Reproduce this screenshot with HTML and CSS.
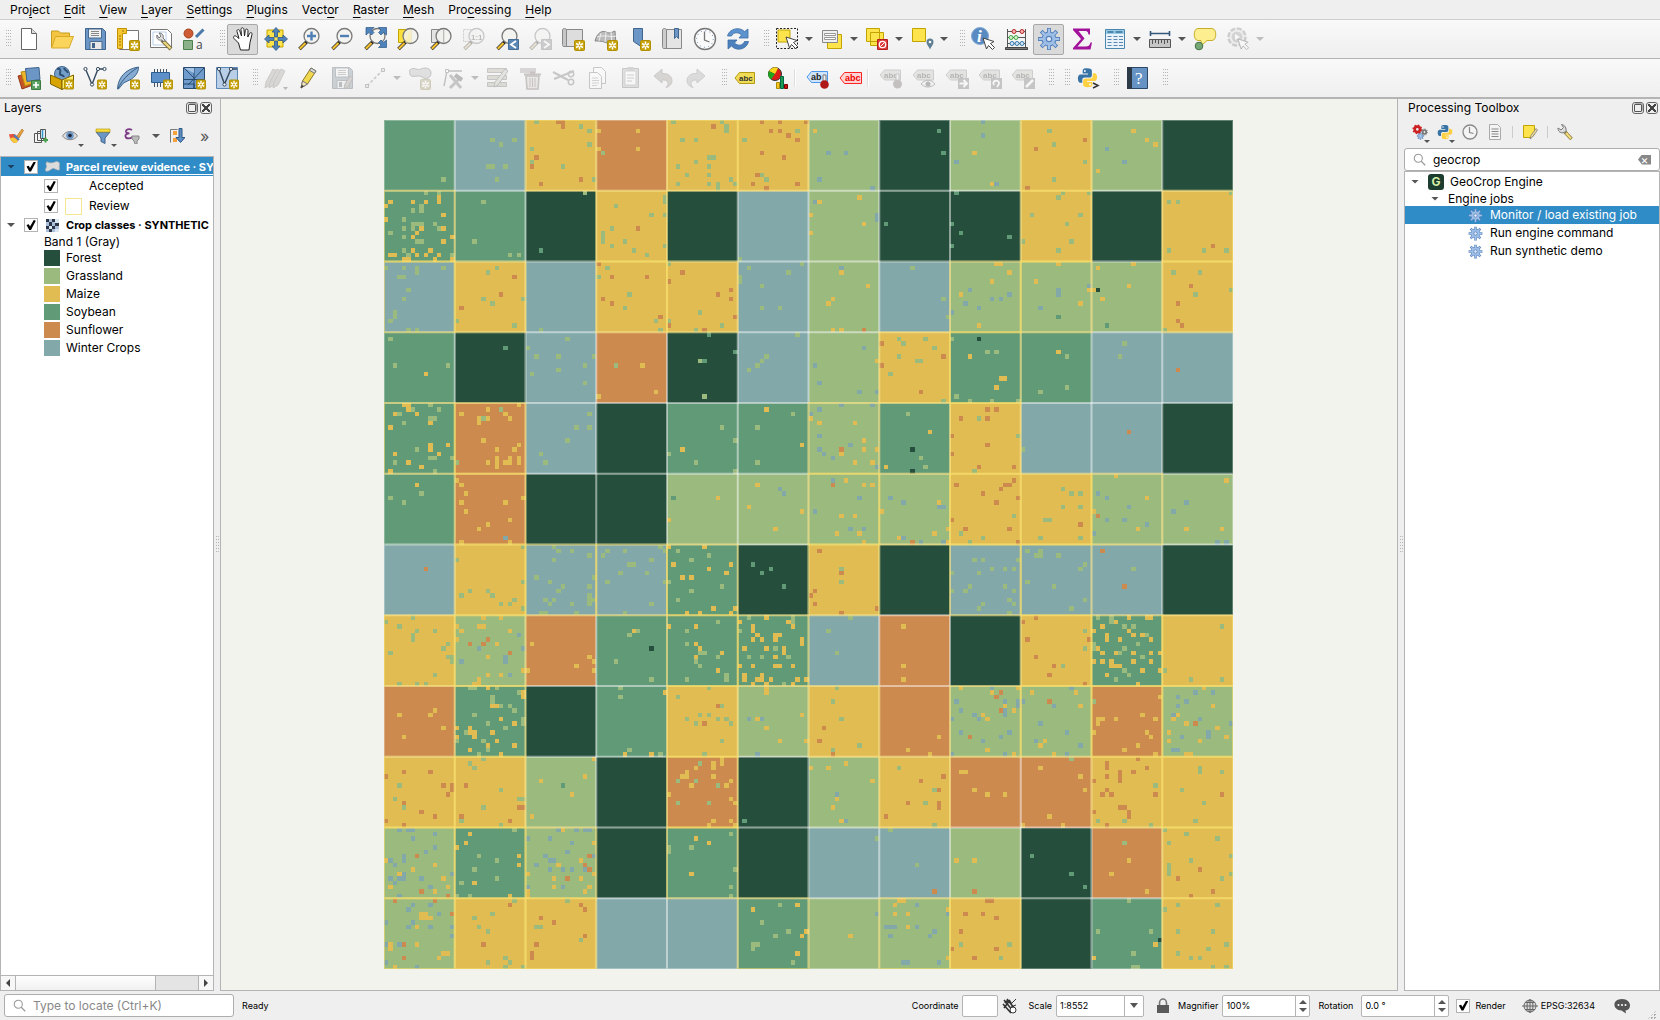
FILE: index.html
```html
<!DOCTYPE html>
<html lang="en">
<head>
<meta charset="utf-8">
<title>Crop map project</title>
<link rel="stylesheet" href="styles.css">
</head>
<body>
<svg class="sprite" aria-hidden="true">
  <symbol id="badge" viewBox="0 0 11 11"><rect x=".5" y=".5" width="10" height="10" rx="1" fill="#c8a30a" stroke="#b08e00"/><path d="M5.500 1.500v8M2 3.500l7 4M9 3.500l-7 4" stroke="#fff" stroke-width="1.500"/><circle cx="5.500" cy="5.500" r="1" fill="#c8a30a"/></symbol>
  <symbol id="mag" viewBox="0 0 24 24"><path d="M10 14.500L2.500 22" stroke="#222" stroke-width="3.600"/><path d="M8.500 16L2.800 21.700" stroke="#f6c431" stroke-width="2.200"/><circle cx="14.500" cy="9" r="7.500" fill="#f2f2ee" fill-opacity=".85" stroke="#7a7a7a" stroke-width="1.300"/></symbol>
  <symbol id="cursor" viewBox="0 0 14 14"><path d="M1 1l3.500 11 2-3.500 4 4 2-2-4-4L12 4.500z" fill="#fff" stroke="#444" stroke-width="1"/></symbol>
  <symbol id="i-new" viewBox="0 0 24 24"><path d="M4.500 1.500h10l5 5v16h-15z" fill="#fff" stroke="#666"/><path d="M14.500 1.500v5h5" fill="#ddd" stroke="#666"/></symbol>
  <symbol id="i-open" viewBox="0 0 24 24"><path d="M1.500 20V4h7l2 2h9v3" fill="#f4c542" stroke="#c79c23"/><path d="M1.500 21l4-11.500h18L19 21z" fill="#fbd55b" stroke="#d8a929"/></symbol>
  <symbol id="i-save" viewBox="0 0 24 24"><path d="M2.500 1.500h17l3 3v18h-20z" fill="#6b96c5" stroke="#3f648d"/><path d="M5.500 2h13v9h-13z" fill="#f1f1f1" stroke="#486b90"/><path d="M8 4.500h8M8 6.500h8M8 8.500h8" stroke="#888"/><path d="M7 14.500h12v8H7z" fill="#e8e8e8" stroke="#486b90"/><path d="M9 16h3v5H9z" fill="#42658a"/></symbol>
  <symbol id="i-layout" viewBox="0 0 24 24"><path d="M3.500 3.500h19v19h-19z" fill="#fff" stroke="#777"/><path d="M1.500 1.500h9v5h-4v15h-5z" fill="#f5c833" stroke="#c29100"/><path d="M3 9h2M3 12h2M3 15h2M3 18h2M7 3v2" stroke="#96720a"/><use href="#badge" x="13" y="13" width="11" height="11"/></symbol>
  <symbol id="i-manager" viewBox="0 0 24 24"><path d="M1.500 2.500h17l4 4v14h-21z" fill="#fff" stroke="#777"/><path d="M4 5h13v13H4z" fill="none" stroke="#b8cfe8"/><path d="M13 13l9 9" stroke="#75683b" stroke-width="4"/><path d="M14.500 14.500l7 7" stroke="#ecd97e" stroke-width="2.400"/><path d="M8 8c-1 3 1 6 5 5l2 2 1-2-2-2c1-3-1-5-4-5l2 3-2 2z" fill="#ddd" stroke="#777"/></symbol>
  <symbol id="i-style" viewBox="0 0 24 24"><circle cx="6.500" cy="6.500" r="4.500" fill="#cf5b34" stroke="#a3421f"/><path d="M21.500 2.500L14 10" stroke="#4a78a8" stroke-width="3"/><path d="M1.500 13.500h9v9h-9z" fill="#8bb18b" stroke="#4c804c"/><text x="14" y="22" font-family="Open Sans, sans-serif" font-size="12" fill="#444">a</text></symbol>
  <symbol id="i-hand" viewBox="0 0 24 24"><path d="M7.500 16L3 11.500c-1.600-2 1-3.500 2.500-2l2.500 2L6 4.500c-.5-2 2-2.700 2.700-.8L10.500 9 10 2.500c0-2.300 2.700-2.300 3 0l.5 6.500.8-5.500c.3-2.200 2.800-1.700 2.700.4L16.800 10l1.700-3.500c1-1.500 2.900-.8 2.500.8L19 15.500 18 23H9.500z" fill="#fff" stroke="#222"/></symbol>
  <symbol id="i-pan" viewBox="0 0 24 24"><path d="M3 3h16v17H3z" fill="#fde44d" stroke="#c2a400"/><g fill="#4f83bb" stroke="#2d5885" stroke-width=".8"><path d="M12 .5l4 4.500h-2.500v5h-3V5H8zM12 23.500l4-4.500h-2.500v-5h-3v5H8zM.5 12L5 8v2.500h5v3H5V16zM23.500 12L19 8v2.500h-5v3h5V16z"/></g></symbol>
  <symbol id="i-zin" viewBox="0 0 24 24"><use href="#mag"/><path d="M14.500 4.500v9M10 9h9" stroke="#4f7fb5" stroke-width="2.400"/></symbol>
  <symbol id="i-zout" viewBox="0 0 24 24"><use href="#mag"/><path d="M10 9h9" stroke="#4f7fb5" stroke-width="2.400"/></symbol>
  <symbol id="i-zfull" viewBox="0 0 24 24"><use href="#mag"/><g fill="#4f83bb" stroke="#2d5885" stroke-width=".7"><path d="M3 .5h8L8.500 3l2.500 2.500L8.500 8 6 5.500 3 8zM23.500.5h-8L18 3l-2.500 2.500L18 8l2.500-2.500L23.500 8zM23.500 20.500h-8L18 18l-2.500-2.500L18 13l2.500 2.500 3-2.500z"/></g></symbol>
  <symbol id="i-zsel" viewBox="0 0 24 24"><path d="M2.500 2.500h13v13h-13z" fill="#fbe03c" stroke="#c2a400"/><use href="#mag"/><path d="M14.500 3v12.500H9" fill="#f7edaa" opacity=".8"/></symbol>
  <symbol id="i-zlay" viewBox="0 0 24 24"><path d="M2.500 2.500h13v13h-13z" fill="#e4e4e4" stroke="#888"/><use href="#mag"/><path d="M14.500 3v12.500" stroke="#bbb"/></symbol>
  <symbol id="i-z11" viewBox="0 0 24 24"><path d="M1.500 2.500h12v12h-12z" fill="#eee" stroke="#888" stroke-dasharray="2 1"/><use href="#mag"/><text x="9" y="12.500" font-family="Liberation Sans, sans-serif" font-weight="bold" font-size="8" fill="#555">1:1</text></symbol>
  <symbol id="i-zlast" viewBox="0 0 24 24"><use href="#mag"/><path d="M13.500 12.500h10v10h-10z" fill="#5b87b5" stroke="#456d96"/><path d="M21 14l-5 3.500 5 3.500" fill="none" stroke="#fff" stroke-width="1.800"/></symbol>
  <symbol id="i-znext" viewBox="0 0 24 24"><use href="#mag"/><path d="M13.500 12.500h10v10h-10z" fill="#888" stroke="#777"/><path d="M16 14l5 3.500-5 3.500" fill="none" stroke="#fff" stroke-width="1.800"/></symbol>
  <symbol id="i-map" viewBox="0 0 24 24"><path d="M4.500 2.500h17v17h-17z" fill="#ddd" stroke="#888"/><path d="M1.500 3c0-2 4-2 4 0v16.500h-3c-1 0-1-2-1-2z" fill="#c6c6c6" stroke="#888"/><use href="#badge" x="13" y="13" width="11" height="11"/></symbol>
  <symbol id="i-map3d" viewBox="0 0 24 24"><path d="M1 14C3 6 8 3 12 5s6 0 9-1l1 13c-5 3-10-4-21-3z" fill="#bbb" stroke="#888"/><path d="M7 6c-1 3-1 5-2 8M12 5l-1 10M17 5l1 12M3 10c8-3 13 1 19-1" fill="none" stroke="#eee"/><use href="#badge" x="13" y="13" width="11" height="11"/></symbol>
  <symbol id="i-mark" viewBox="0 0 24 24"><path d="M6.500 1.500h9v19l-4.500-3-4.500-3z" fill="#6b96c5" stroke="#3f648d"/><use href="#badge" x="13" y="13" width="11" height="11"/></symbol>
  <symbol id="i-book" viewBox="0 0 24 24"><path d="M5.500 2.500h16v19h-16z" fill="#e4e4e4" stroke="#888"/><path d="M2.500 3c0-2 4-2 4 0v18.500h-3c-1 0-1-2-1-2z" fill="#ccc" stroke="#888"/><path d="M14.500 1.500h4v10l-2-2-2 2z" fill="#6b96c5" stroke="#3f648d"/></symbol>
  <symbol id="i-clock" viewBox="0 0 24 24"><circle cx="12" cy="12" r="10.500" fill="#fafafa" stroke="#777" stroke-width="1.400"/><circle cx="12" cy="12" r="8.300" fill="none" stroke="#5b87b5" stroke-dasharray="1 3.350"/><path d="M11.500 4.500V13l5 2" fill="none" stroke="#777" stroke-width="1.300"/></symbol>
  <symbol id="i-refresh" viewBox="0 0 24 24"><path d="M1.500 9C3 2 13-1 18.500 4.500L22 2v9h-9l2.500-3C12 4.500 7 5.500 5.500 9z" fill="#5c93cf" stroke="#3a6da5" stroke-width=".8"/><path d="M22.500 14.500C21 22 11 25 5.500 19L2 22v-9h9l-2.500 3C12 19.500 17 18.500 18.500 14.500z" fill="#4c81bd" stroke="#3a6da5" stroke-width=".8"/></symbol>
  <symbol id="i-select" viewBox="0 0 24 24"><path d="M1.500 1.500h21v20h-21z" fill="none" stroke="#222" stroke-dasharray="2 1.500"/><path d="M3 3h12v12H3z" fill="#fde44d" stroke="#c2a400"/><use href="#cursor" x="10" y="9" width="14" height="14"/></symbol>
  <symbol id="i-form" viewBox="0 0 24 24"><path d="M7.500 7.500h14v14h-14z" fill="#fde44d" stroke="#c2a400"/><path d="M2.500 3.500h15v12h-15z" fill="#f0f0f0" stroke="#888"/><path d="M4.500 6.500h11v2h-11zM4.500 10.500h11v2h-11z" fill="#fff" stroke="#999"/></symbol>
  <symbol id="i-desel" viewBox="0 0 24 24"><path d="M1.500 1.500h13v13h-13zM5.500 5.500h13v13h-13z" fill="#fde44d" stroke="#c2a400"/><path d="M12.500 12.500h10v10h-10z" fill="#dd3c3c" stroke="#b51e1e"/><circle cx="17.500" cy="17.500" r="3.200" fill="none" stroke="#fff" stroke-width="1.300"/><path d="M15.500 19.500l4-4" stroke="#fff"/></symbol>
  <symbol id="i-loc" viewBox="0 0 24 24"><path d="M2.500 1.500h13v13h-13z" fill="#fde44d" stroke="#c2a400"/><path d="M20 22.500c-1-3-3.500-4.500-3.500-7.500a3.500 3.500 0 017 0c0 3-2.500 4.500-3.500 7.500z" fill="#5f7f95"/><circle cx="20" cy="15" r="1.300" fill="#fff"/></symbol>
  <symbol id="i-info" viewBox="0 0 24 24"><circle cx="9" cy="9" r="8.500" fill="#5a8ac2" stroke="#82a9d2"/><text x="6" y="15" font-family="Liberation Serif, serif" font-style="italic" font-weight="bold" font-size="17" fill="#fff">i</text><use href="#cursor" x="11" y="10" width="14" height="14"/></symbol>
  <symbol id="i-abacus" viewBox="0 0 24 24"><path d="M3.500 2v19M21.500 2v19M3 4.500h19M3 10.500h19M3 16.500h19M1 22h23" stroke="#555" fill="none"/><path d="M1.500 20.500h22v2h-22z" fill="#777" stroke="#444"/><g stroke-width="1"><circle cx="10" cy="4.500" r="2" fill="#f6b5b5" stroke="#b22"/><circle cx="18" cy="4.500" r="2" fill="#f6b5b5" stroke="#b22"/><circle cx="7" cy="10.500" r="2" fill="#d4f1cd" stroke="#4a4"/><circle cx="12" cy="10.500" r="2" fill="#d4f1cd" stroke="#4a4"/><circle cx="8" cy="16.500" r="2" fill="#cfe6fa" stroke="#3477a8"/><circle cx="13" cy="16.500" r="2" fill="#cfe6fa" stroke="#3477a8"/><circle cx="18" cy="16.500" r="2" fill="#cfe6fa" stroke="#3477a8"/></g></symbol>
  <symbol id="i-gear" viewBox="0 0 24 24"><g stroke="#5582bd" stroke-width="4"><path d="M12 1v22M1 12h22M4.200 4.200l15.600 15.600M19.800 4.200L4.200 19.800"/></g><circle cx="12" cy="12" r="7.500" fill="#5582bd"/><g stroke="#a5c3e8" stroke-width="2.200"><path d="M12 1.800v20.400M1.800 12h20.400M4.900 4.900l14.200 14.200M19.100 4.900L4.900 19.100"/></g><circle cx="12" cy="12" r="6.500" fill="#9cbde5"/><circle cx="12" cy="12" r="2.700" fill="#e4ebf5" stroke="#5582bd" stroke-width="1.200"/></symbol>
  <symbol id="i-sigma" viewBox="0 0 24 24"><path d="M3 1.500h17v6h-1.500c-.5-3-1.500-3.500-4-3.500H8.500l6 7.500-7 8h8c3 0 4-1 5-4H22l-1.500 7H3v-1.500l8-9-8-9z" fill="#a3129b"/></symbol>
  <symbol id="i-table" viewBox="0 0 24 24"><path d="M2.500 2.500h19v19h-19z" fill="#eaf3fa" stroke="#4b86ae"/><path d="M3 3h18v4H3z" fill="#98cbe4"/><path d="M4.500 5h6M12.500 5h7" stroke="#39709a" stroke-width="1.500"/><path d="M4.500 9.500h4M10.500 9.500h4M16 9.500h4M4.500 12.500h4M10.500 12.500h4M16 12.500h4M4.500 15.500h4M10.500 15.500h4M16 15.500h4M4.500 18.500h4M10.500 18.500h4M16 18.500h4" stroke="#5b87b5"/></symbol>
  <symbol id="i-ruler" viewBox="0 0 24 24"><path d="M2 6.500h20M2.500 4v5M21.500 4v5" stroke="#35577e" stroke-width="1.600"/><path d="M1.500 12.500h21v8h-21z" fill="#c6c6c6" stroke="#555"/><path d="M4.500 13v4M7.500 13v3M10.500 13v4M13.500 13v3M16.500 13v4M19.500 13v3" stroke="#555"/></symbol>
  <symbol id="i-tip" viewBox="0 0 24 24"><path d="M5 1.500h14c5 0 5 12 0 12h-5L8 19v-5.500H5c-5 0-5-12 0-12z" fill="#fdee8f" stroke="#c8ae28"/><circle cx="6" cy="19" r="3.800" fill="#74a874" stroke="#486f48"/></symbol>
  <symbol id="i-action" viewBox="0 0 24 24"><circle cx="11" cy="10" r="8.500" fill="#e3e3e3" stroke="#888" stroke-width="2.500" stroke-dasharray="5 1.600"/><circle cx="11" cy="10" r="5.500" fill="#999"/><path d="M9 7l5 3-5 3z" fill="#fff"/><use href="#cursor" x="11" y="11" width="13" height="13"/></symbol>
  <symbol id="i-dsm" viewBox="0 0 24 24"><path d="M1 10l11-3 4 12-11 4z" fill="#c6532a" stroke="#963b19"/><path d="M4 6l12-2 3 12-11 4z" fill="#f0b429" stroke="#b98610"/><path d="M8.500 2.500L22 1.500l1 12-13 2z" fill="#6b96c5" stroke="#3f648d"/><path d="M14.500 14.500h9v9h-9z" fill="#5ca063" stroke="#3b7b41"/><path d="M19 16v6M16 19h6" stroke="#fff" stroke-width="1.700"/></symbol>
  <symbol id="i-gpkg" viewBox="0 0 24 24"><circle cx="12" cy="8" r="7.500" fill="#739fc9" stroke="#3f648d"/><path d="M7 3c3-1 4 1 3 4s3 1 4 4M14 2c1 3 3 2 4 5" fill="none" stroke="#2e4f73" stroke-width="2"/><path d="M.5 9L12 14v9.500L.5 18z" fill="#d8a500" stroke="#7d6000"/><path d="M12 14l11.500-5v9L12 23.500z" fill="#fdea62" stroke="#7d6000"/><use href="#badge" x="14" y="13" width="10" height="11"/></symbol>
  <symbol id="i-shp" viewBox="0 0 24 24"><path d="M2.500 3L9 18.500 15 3h6" fill="none" stroke="#34495e" stroke-width="1.400"/><g fill="#fff" stroke="#34495e"><circle cx="2.500" cy="3" r="1.600"/><circle cx="9" cy="18.500" r="1.600"/><circle cx="15" cy="3" r="1.600"/><circle cx="21.500" cy="3" r="1.600"/></g><use href="#badge" x="14" y="13" width="10" height="11"/></symbol>
  <symbol id="i-feather" viewBox="0 0 24 24"><path d="M1.500 23C2 12 9 3 22.500 1c0 6-4 10-7 12l-8 4-5 6z" fill="#86acd3" stroke="#3f648d"/><path d="M2 22.500C6 14 12 8 21 2" stroke="#355a80" fill="none"/><use href="#badge" x="14" y="13" width="10" height="11"/></symbol>
  <symbol id="i-chip" viewBox="0 0 24 24"><path d="M5.500 3v18M8.500 3v18M11.500 3v18M14.500 3v18M17.500 3v18" stroke="#456"/><path d="M2.500 6.500h18v10h-18z" fill="#5d8fc8" stroke="#2e5d90"/><use href="#badge" x="14" y="13" width="10" height="11"/></symbol>
  <symbol id="i-mesh" viewBox="0 0 24 24"><path d="M1.500 1.500h21v21h-21z" fill="#6f9ccc" stroke="#294b6e"/><path d="M2 13.500h20M12 2v20M2 2l20 20M22 2L6 19M2 18h10v4" fill="none" stroke="#294b6e"/><path d="M2 2h10v5z" fill="#a6c4e3"/><use href="#badge" x="14" y="13" width="10" height="11"/></symbol>
  <symbol id="i-virt" viewBox="0 0 24 24"><path d="M1.500 1.500h21v21h-21z" fill="#b9cfe7" stroke="#5b87b5"/><path d="M4 3l5.500 15L16 3h6" fill="none" stroke="#34495e" stroke-width="1.400"/><g fill="#fff" stroke="#34495e"><circle cx="4" cy="3" r="1.600"/><circle cx="9.500" cy="18.500" r="1.600"/><circle cx="16" cy="3" r="1.600"/></g><use href="#badge" x="14" y="13" width="10" height="11"/></symbol>
  <symbol id="i-pencil" viewBox="0 0 24 24"><path d="M4 22l1.500-7L14 2l5 3-8.500 13z" fill="#f0d850" stroke="#8b7a22"/><path d="M4 22l1.500-7 5 3z" fill="#efe0c0" stroke="#777"/><path d="M4 22l.8-3 2 1z" fill="#222"/><path d="M14 2l5 3-1.500 2.300-5-3z" fill="#d9d9d9" stroke="#777"/></symbol>
  <symbol id="i-pencils" viewBox="0 0 24 24"><g fill="#b5a39a" stroke="#8a7d75"><path d="M1 22l1-6L9 3l4 2-7 14z"/><path d="M5 22l1-6 7-13 4 2-7 14z"/><path d="M9 22l1-6 7-13 4 2-7 14z"/></g><path d="M19 21l5 0-2.500 3z" fill="#555"/></symbol>
  <symbol id="i-saveedit" viewBox="0 0 24 24"><use href="#i-save"/><path d="M14 23l1-5 5-8 3 2-5 9z" fill="#b5958c" stroke="#6b625c"/></symbol>
  <symbol id="i-line" viewBox="0 0 24 24"><path d="M4 20L20 4" stroke="#777" stroke-dasharray="3 2" stroke-width="1.500"/><path d="M2.500 18.500h3v3h-3zM18.500 2.500h3v3h-3z" fill="#ddd" stroke="#666"/></symbol>
  <symbol id="i-poly" viewBox="0 0 24 24"><path d="M2 4c4-4 7 1 11-1s10-1 10 4-5 7-9 4-11 2-12-3 0-4 0-4z" fill="#bbb" stroke="#666"/><use href="#badge" x="12" y="13" width="11" height="11"/></symbol>
  <symbol id="i-vertex" viewBox="0 0 24 24"><path d="M3 20L6 5h15" fill="none" stroke="#666" stroke-width="1.400"/><path d="M4.500 3.500h3v3h-3z" fill="#fff" stroke="#666"/><path d="M9 9l11 13M19 12L9 22" stroke="#777" stroke-width="3"/><path d="M14 9l7 5" stroke="#555" stroke-width="4"/></symbol>
  <symbol id="i-multi" viewBox="0 0 24 24"><path d="M1.500 2.500h19v4h-19zM1.500 9.500h19v4h-19zM1.500 16.500h19v4h-19z" fill="#b8b184" stroke="#777"/><path d="M8 21l1-5L19 3l3 2-10 14z" fill="#c6c6a9" stroke="#666"/></symbol>
  <symbol id="i-trash" viewBox="0 0 24 24"><path d="M1 2h16v5H1z" fill="#a99"/><path d="M7 10h13l-1 13H8z" fill="#e2cccc" stroke="#9a6666" stroke-width="1.600"/><path d="M5 8.500h17M11 6.500h5" stroke="#9a6666" stroke-width="2"/><path d="M11 12v9M13.500 12v9M16 12v9" stroke="#9a6666"/></symbol>
  <symbol id="i-cut" viewBox="0 0 24 24"><path d="M1 6l15 8M2 13L22 5" stroke="#777" stroke-width="2"/><circle cx="19" cy="8" r="2.700" fill="none" stroke="#777" stroke-width="1.500"/><circle cx="19" cy="16" r="2.700" fill="none" stroke="#777" stroke-width="1.500"/></symbol>
  <symbol id="i-copy" viewBox="0 0 24 24"><path d="M8.500 1.500h8l4 4v12h-12z" fill="#fff" stroke="#777"/><path d="M4.500 6.500h8l4 4v12h-12z" fill="#fff" stroke="#777"/><path d="M7 12h6M7 14.500h7M7 17h7M7 19.500h5" stroke="#999"/></symbol>
  <symbol id="i-paste" viewBox="0 0 24 24"><path d="M4.500 2.500h16v19h-16z" fill="#bbb" stroke="#777"/><path d="M7 5h11v14H7z" fill="#fff" stroke="#999"/><path d="M9.500 1h6v4h-6z" fill="#999"/><path d="M9 9h7M9 12h7M9 15h5" stroke="#888"/></symbol>
  <symbol id="i-undo" viewBox="0 0 24 24"><path d="M3 10l8-7v4.500c12-1 13 12 4 14 4-4 2-8-4-7.500V17z" fill="#b39b87" stroke="#8f7b69"/></symbol>
  <symbol id="i-redo" viewBox="0 0 24 24"><path d="M21 10l-8-7v4.500c-12-1-13 12-4 14-4-4-2-8 4-7.500V17z" fill="#aab2aa" stroke="#7d887d"/></symbol>
  <symbol id="i-label" viewBox="0 0 24 24"><path d="M2 12l4.500-5.500h15v11h-15z" fill="#f0db55" stroke="#b39a15"/><text x="6" y="15" font-family="Liberation Sans, sans-serif" font-weight="bold" font-size="8" fill="#333">abc</text></symbol>
  <symbol id="i-chart" viewBox="0 0 24 24"><circle cx="9" cy="8" r="6.500" fill="#d91e18" stroke="#333"/><path d="M9 8L3 5a6.500 6.500 0 019-2.800z" fill="#f7d61d"/><path d="M9 8L3 5a6.500 6.500 0 002 8.500z" fill="#1da51d"/><path d="M10.500 16.500h3v6h-3z" fill="#f7c61d" stroke="#a80"/><path d="M14.500 10.500h3v12h-3z" fill="#1c9c54" stroke="#064"/><path d="M18.500 18.500h3v4h-3z" fill="#c11" stroke="#700"/></symbol>
  <symbol id="i-pin" viewBox="0 0 24 24"><path d="M1 11l4.500-5.500h16v11h-16z" fill="#cfe4fb" stroke="#4b97ec"/><text x="5" y="14" font-family="Liberation Sans, sans-serif" font-weight="bold" font-size="9" fill="#222">ab</text><path d="M17 9h3v7h-3z" fill="#eee" stroke="#777"/><circle cx="18.500" cy="18.500" r="4.300" fill="#b01818"/></symbol>
  <symbol id="i-unpl" viewBox="0 0 24 24"><path d="M1 12l4.500-5.500h17v11h-17z" fill="#ffd3d3" stroke="#f22"/><text x="6" y="15" font-family="Liberation Sans, sans-serif" font-weight="bold" font-size="9" fill="#e00">abc</text></symbol>
  <symbol id="i-tagbase" viewBox="0 0 24 24"><path d="M1 9l4.500-5h16v10h-16z" fill="#c9c5ad" stroke="#888"/><text x="5" y="12" font-family="Liberation Sans, sans-serif" font-weight="bold" font-size="8" fill="#444">abc</text></symbol>
  <symbol id="i-tagpin" viewBox="0 0 24 24"><use href="#i-tagbase"/><path d="M17 8h3v7h-3z" fill="#eee" stroke="#777"/><circle cx="18.500" cy="18" r="4.500" fill="#866"/></symbol>
  <symbol id="i-tageye" viewBox="0 0 24 24"><use href="#i-tagbase"/><path d="M9 18c4-5 10-5 14 0-4 4-10 4-14 0z" fill="#eee" stroke="#555"/><circle cx="16" cy="18" r="2.500" fill="#555"/></symbol>
  <symbol id="i-tagmove" viewBox="0 0 24 24"><use href="#i-tagbase"/><path d="M13 12h11v11H13z" fill="#777"/><path d="M14.500 17.500h7M18.500 14l3.500 3.500-3.500 3.500" stroke="#fff" stroke-width="2" fill="none"/></symbol>
  <symbol id="i-tagrot" viewBox="0 0 24 24"><use href="#i-tagbase"/><path d="M13 12h11v11H13z" fill="#777"/><path d="M16 19c-3-5 6-6 5-1l-2 3" stroke="#fff" stroke-width="1.800" fill="none"/></symbol>
  <symbol id="i-tagedit" viewBox="0 0 24 24"><use href="#i-tagbase"/><path d="M13 12h11v11H13z" fill="#777"/><path d="M15 21l7-7" stroke="#fff" stroke-width="2.500"/></symbol>
  <symbol id="i-python" viewBox="0 0 24 24"><path d="M11.500 1.500c-4 0-5 1-5 3v3h6v1H4c-2 0-3 2-3 4.500S2 18 4 18h2v-3c0-2 1-3 3-3h5c2 0 3-1 3-3V4.500c0-2-1.500-3-5.500-3z" fill="#3773a5"/><circle cx="9" cy="4.500" r="1.100" fill="#fff"/><path d="M12.500 23c4 0 5-1 5-3v-3h-6v-1H20c2 0 3-2 3-4.500S22 7 20 7h-2v3c0 2-1 3-3 3h-5c-2 0-3 1-3 3v4c0 2 1.500 3 5.500 3z" fill="#fed142"/><circle cx="15" cy="20" r="1.100" fill="#fff"/></symbol>
  <symbol id="i-pycon" viewBox="0 0 24 24"><use href="#i-python" x="1" y="1" width="21" height="21"/><path d="M17 17l5 2.500-5 2.500" fill="none" stroke="#333" stroke-width="1.500"/></symbol>
  <symbol id="i-help" viewBox="0 0 24 24"><path d="M2.500 1.500h20v21h-20z" fill="#6692c4" stroke="#2b4766"/><path d="M2 1h5v22H2z" fill="#2c3a47"/><text x="10" y="18" font-family="Liberation Serif, serif" font-size="17" fill="#fff">?</text></symbol>
  <symbol id="i-brush" viewBox="0 0 16 16"><path d="M9 8l5-7 1.500 1.500L11 10z" fill="#e7a33b" stroke="#a86512" stroke-width=".6"/><path d="M1 6c3 1 4-1 7 1l3 4-3 4c-4 0-6-3-7-9z" fill="#e5533c"/><path d="M2 10c3-1 5-1 8 3l-2 2c-3 0-5-2-6-5z" fill="#f4cb3e"/><path d="M6 7l5 5" stroke="#4b82bd" stroke-width="2"/></symbol>
  <symbol id="i-group" viewBox="0 0 16 16"><path d="M1.500 5.500h7v9h-7zM4.500 3.500h7v9h-7z" fill="#f3f3f3" stroke="#555"/><path d="M7.500 1.500h5v9h-5z" fill="#e8eef5" stroke="#555"/><path d="M9.500 2v8" stroke="#39c" stroke-width="1.500"/><path d="M10 12h5M12.500 9.500v5" stroke="#4a9d4a" stroke-width="2"/></symbol>
  <symbol id="i-eye" viewBox="0 0 16 16"><path d="M.5 8C4 2 12 2 15.500 8 12 13 4 13 .5 8z" fill="#ddd" stroke="#888"/><circle cx="8" cy="7.500" r="3.800" fill="#6b96c5"/><circle cx="8" cy="7.500" r="1.800" fill="#223"/></symbol>
  <symbol id="i-filter" viewBox="0 0 16 16"><path d="M1 4h14l-5 6v5.500l-4-2V10z" fill="#6b96c5" stroke="#3f648d"/><path d="M1 1h14v3H1z" fill="#f9dd3f" stroke="#b89c12" stroke-width=".7"/></symbol>
  <symbol id="i-expr" viewBox="0 0 16 16"><path d="M8 2C5 0 1.500 1.500 2 3.800 2.300 5 4 5.300 5.500 5.300 3 5.300 1 6.500 1.500 8.500 2 11 6 11 8.500 9" fill="none" stroke="#7d3d86" stroke-width="1.800"/><path d="M8 8h7v3l-2 2v3h-2l-1-3-2-2z" fill="#bbb" stroke="#888"/></symbol>
  <symbol id="i-expand" viewBox="0 0 16 16"><path d="M1.500 1.500v13M1.500 1.500h7M4 5h4M4 12h4" stroke="#777"/><path d="M4 3h4v4H4zM4 10h4v4H4z" fill="#f5a13c"/><path d="M10 .5h3v9h3l-4.500 5-4.500-5h3z" fill="#5c8dc3" stroke="#2d5885"/></symbol>
  <symbol id="i-gears" viewBox="0 0 18 18"><use href="#i-gear" x="5" y="9" width="9" height="9"/><circle cx="6" cy="6" r="3" fill="none" stroke="#cc2222" stroke-width="3"/><circle cx="6" cy="6" r="4.500" fill="none" stroke="#cc2222" stroke-width="2" stroke-dasharray="1.700 1.830"/><circle cx="14" cy="9" r="2" fill="none" stroke="#777" stroke-width="2"/><circle cx="14" cy="9" r="3.500" fill="none" stroke="#777" stroke-dasharray="1.300 1.400"/></symbol>
  <symbol id="i-history" viewBox="0 0 16 16"><circle cx="8" cy="8" r="7" fill="#f4f4f4" stroke="#888" stroke-width="1.300"/><path d="M7.500 3v5.500l4 1" fill="none" stroke="#888" stroke-width="1.200"/></symbol>
  <symbol id="i-doc" viewBox="0 0 16 16"><path d="M2.500.5h8l3 3v12h-11z" fill="#f4f4f4" stroke="#aaa"/><path d="M4.500 5h7M4.500 7.500h7M4.500 10h7M4.500 12.500h7" stroke="#888"/></symbol>
  <symbol id="i-edit" viewBox="0 0 16 16"><path d="M1.500 1.500h11v9l-3 3h-8z" fill="#fde44d" stroke="#c2a400"/><path d="M8 15l1-3.500 5-7 1.500 1.500-5 7z" fill="#f1dfa0" stroke="#777" stroke-width=".8"/></symbol>
  <symbol id="i-wrench" viewBox="0 0 16 16"><path d="M8 8l6.500 7" stroke="#8f8141" stroke-width="3.600"/><path d="M9 9l5 5.500" stroke="#f3dc7a" stroke-width="2"/><path d="M1 4c0 4 3 5.500 6 4.500L9 7.500C9.500 4 8 1 4.500.5l2 3L4 6z" fill="#ddd" stroke="#777"/></symbol>
  <symbol id="i-search" viewBox="0 0 16 16"><circle cx="6.500" cy="6.500" r="5" fill="none" stroke="#999" stroke-width="1.300"/><path d="M10 10l5 5" stroke="#999" stroke-width="1.600"/></symbol>
  <symbol id="i-polygon" viewBox="0 0 16 12"><path d="M2 1c3 2 7 1 9 0s5 0 4.500 3 0 3 0 5-4 0-6-1-5 4-8 3 1-4 0-6 0-3 .5-4z" fill="#dcdcdc" stroke="#aaa" stroke-width=".7"/></symbol>
  <symbol id="i-raster" viewBox="0 0 13 13"><path d="M0 0h13v13H0z" fill="#a9bfdc"/><path d="M0 0h3v3H0zM6 0h3v3H6zM3 3h3v4H3zM9 4h4v3H9zM6 7h3v3H6zM0 7h3v3H0zM3 10h3v3H3z" fill="#2b3546"/><path d="M9 0h4v4H9zM3 7h3v3H3zM9 10h4v3H9z" fill="#dbe6f3"/></symbol>
  <symbol id="i-lock" viewBox="0 0 14 16"><path d="M3.500 8V5a3.500 4 0 017 0v3" fill="none" stroke="#777" stroke-width="1.600"/><path d="M1 7h12v8H1z" fill="#5a5a5a"/></symbol>
  <symbol id="i-globe" viewBox="0 0 16 16"><circle cx="8" cy="8" r="6" fill="#ddd" stroke="#666"/><path d="M0 8h16M8 1v14M3 4.500h10M3 11.500h10" stroke="#666"/><ellipse cx="8" cy="8" rx="3" ry="6" fill="none" stroke="#666"/></symbol>
  <symbol id="i-bubble" viewBox="0 0 16 16"><path d="M8 1c10 0 10 11 3.500 11.500L12 15.500 7.500 12.500C-2 12-2 1 8 1z" fill="#555"/><circle cx="4.500" cy="7" r="1" fill="#fff"/><circle cx="8" cy="7" r="1" fill="#fff"/><circle cx="11.500" cy="7" r="1" fill="#fff"/></symbol>
  <symbol id="i-mouse" viewBox="0 0 16 16"><path d="M2 2l9 11M5 1l8 10M1 6l8 9M8 2l-6 8" stroke="#333" stroke-width="1.600"/><circle cx="11" cy="12" r="3" fill="#fff" stroke="#333"/><path d="M9 6l5-5M9 9l5-2" stroke="#333"/><path d="M3 5c2-3 5-2 6 0" fill="none" stroke="#333" stroke-width="2"/></symbol>
</svg>

<nav class="menubar">
  <button>Pro<u>j</u>ect</button><button><u>E</u>dit</button><button><u>V</u>iew</button><button><u>L</u>ayer</button><button><u>S</u>ettings</button><button><u>P</u>lugins</button><button>Vect<u>o</u>r</button><button><u>R</u>aster</button><button><u>M</u>esh</button><button>Pro<u>c</u>essing</button><button><u>H</u>elp</button>
</nav>

<div class="toolbar" data-tools="| new open save layout manager style | hand* pan zin zout zfull zsel zlay z11- zlast znext- map map3d mark book clock refresh | select> form> desel> loc> | info abacus gear* sigma table> ruler> tip action->"></div>
<div class="toolbar" data-tools="| dsm gpkg shp feather chip mesh virt | pencils- pencil saveedit- line-> poly- vertex-> multi- trash- cut- copy- paste- undo- redo- | label chart / pin unpl / tagpin- tageye- tagmove- tagrot- tagedit- | | pycon | help |"></div>

<main class="workspace">
  <aside class="dock layers">
    <header class="dock-title"><h2>Layers</h2><button class="float" aria-label="Float Layers"></button><button class="close" aria-label="Close Layers"></button></header>
    <div class="dock-tools">
      <button aria-label="Styling"><svg><use href="#i-brush"/></svg></button>
      <button aria-label="Add group"><svg><use href="#i-group"/></svg></button>
      <button class="drop" aria-label="Map themes"><svg><use href="#i-eye"/></svg></button>
      <button class="drop" aria-label="Filter legend"><svg><use href="#i-filter"/></svg></button>
      <button class="side" aria-label="Filter by expression"><svg><use href="#i-expr"/></svg></button>
      <button aria-label="Expand all"><svg><use href="#i-expand"/></svg></button>
      <button class="more" aria-label="More">»</button>
    </div>
    <div class="tree">
      <ul>
        <li class="layer selected"><i class="twist"></i><input type="checkbox" checked id="l1"><svg class="li"><use href="#i-polygon"/></svg><label for="l1">Parcel review evidence · SYNTHETIC</label></li>
        <li class="symbol"><input type="checkbox" checked id="l2"><i class="box"></i><label for="l2">Accepted</label></li>
        <li class="symbol"><input type="checkbox" checked id="l3"><i class="box yellow"></i><label for="l3">Review</label></li>
        <li class="layer"><i class="twist"></i><input type="checkbox" checked id="l4"><svg class="li"><use href="#i-raster"/></svg><label for="l4">Crop classes · SYNTHETIC</label></li>
        <li class="band">Band 1 (Gray)</li>
        <li class="class"><i class="forest"></i>Forest</li>
        <li class="class"><i class="grassland"></i>Grassland</li>
        <li class="class"><i class="maize"></i>Maize</li>
        <li class="class"><i class="soybean"></i>Soybean</li>
        <li class="class"><i class="sunflower"></i>Sunflower</li>
        <li class="class"><i class="winter"></i>Winter Crops</li>
      </ul>
      <div class="hscroll"><button class="left" aria-label="Scroll left"></button><span class="thumb"></span><span class="track"></span><button class="right" aria-label="Scroll right"></button></div>
    </div>
  </aside>
  <div class="splitter"></div>
  <section class="canvas"><svg id="map" viewBox="0 0 192 192" role="img" aria-label="Crop classes map"></svg></section>
  <div class="splitter"></div>
  <aside class="dock toolbox">
    <header class="dock-title"><h2>Processing Toolbox</h2><button class="float" aria-label="Float toolbox"></button><button class="close" aria-label="Close toolbox"></button></header>
    <div class="dock-tools">
      <button class="drop" aria-label="Models"><svg><use href="#i-gears"/></svg></button>
      <button class="drop" aria-label="Scripts"><svg><use href="#i-python"/></svg></button>
      <button aria-label="History"><svg><use href="#i-history"/></svg></button>
      <button aria-label="Results"><svg><use href="#i-doc"/></svg></button>
      <i class="sep"></i>
      <button aria-label="Edit in place"><svg><use href="#i-edit"/></svg></button>
      <i class="sep"></i>
      <button aria-label="Options"><svg><use href="#i-wrench"/></svg></button>
    </div>
    <div class="search"><svg><use href="#i-search"/></svg><input type="text" value="geocrop" aria-label="Search"><button aria-label="Clear">×</button></div>
    <ul class="tree algs">
      <li class="provider"><i class="twist"></i><b class="logo">G</b>GeoCrop Engine</li>
      <li class="folder"><i class="twist"></i>Engine jobs</li>
      <li class="alg selected"><svg><use href="#i-gear"/></svg>Monitor / load existing job</li>
      <li class="alg"><svg><use href="#i-gear"/></svg>Run engine command</li>
      <li class="alg"><svg><use href="#i-gear"/></svg>Run synthetic demo</li>
    </ul>
  </aside>
</main>

<footer class="status">
  <div class="search locator"><svg><use href="#i-search"/></svg><input type="text" placeholder="Type to locate (Ctrl+K)" aria-label="Locator"></div>
  <span class="ready">Ready</span>
  <label for="coord">Coordinate</label><input class="coord" id="coord" type="text">
  <button class="plain mouse" aria-label="Toggle extents"><svg><use href="#i-mouse"/></svg></button>
  <label for="scale">Scale</label><span class="field combo"><input id="scale" type="text" value="1:8552"><button aria-label="Scales"></button></span>
  <button class="plain lock" aria-label="Lock scale"><svg><use href="#i-lock"/></svg></button>
  <label for="magn">Magnifier</label><span class="field spin"><input id="magn" type="text" value="100%"><i class="steps"></i></span>
  <label class="rot" for="rot">Rotation</label><span class="field spin"><input id="rot" type="text" value="0.0 °"><i class="steps"></i></span>
  <input class="render" id="render" type="checkbox" checked><label for="render">Render</label>
  <button class="plain crs"><svg><use href="#i-globe"/></svg>EPSG:32634</button>
  <button class="plain messages" aria-label="Messages"><svg><use href="#i-bubble"/></svg></button>
  <i class="grip"></i>
</footer>
<script src="app.js"></script>
</body>
</html>
```
FILE: styles.css
```css
* { box-sizing: border-box; }
body { margin: 0; height: 100vh; display: flex; flex-direction: column; background: #efefef; color: #000; font: 12px/16px Inter, "Liberation Sans", Arial, sans-serif; overflow: hidden; }
button, input { font: inherit; color: inherit; padding: 0; margin: 0; border: 0; background: none; }
ul { list-style: none; margin: 0; padding: 0; }
h2 { margin: 0; font-size: 12px; font-weight: normal; }
i { font-style: normal; }
.sprite { display: none; }
input[type="checkbox"] { appearance: none; flex: none; width: 14px; height: 14px; background: #fff; border: 1px solid #b4b4b4; display: grid; place-items: center; }
input[type="checkbox"]:checked::before { content: ""; width: 10px; height: 10px; background: #000; clip-path: polygon(5% 50%, 28% 42%, 40% 66%, 78% 0, 98% 8%, 50% 100%, 32% 100%); }

.menubar { flex: none; height: 20px; display: flex; gap: 14px; padding: 0 10px; border-bottom: 1px solid #cfcfcf; }
.menubar u { text-underline-offset: 3px; }

.toolbar { flex: none; height: 39px; display: flex; align-items: center; gap: 2px; margin-left: -3px; background: linear-gradient(#f9f9f9, #efefef); border-bottom: 1px solid #b4b4b4; }
.toolbar + .toolbar { height: 40px; border-bottom-width: 2px; }
.tool { width: 31px; height: 31px; display: grid; place-items: center; border-radius: 2px; }
.tool svg { width: 24px; height: 24px; }
.tool.on { background: #dadada; border: 1px solid #a8a8a8; }
.tool:disabled svg { opacity: .36; filter: grayscale(.7); }
.arrow { width: 10px; height: 31px; display: grid; place-items: center; }
.arrow::before { content: ""; border: 4px solid transparent; border-top-color: #555; border-bottom: 0; }
.arrow:disabled::before { opacity: .35; }
.handle { width: 14px; height: 18px; padding-left: 8px; }
.handle::before { content: ""; display: block; width: 6px; height: 18px; background: conic-gradient(#b4b4b4 25%, transparent 0) 0 0 / 2px 3px; }
.sep { width: 5px; height: 18px; border-left: 1px solid #fff; box-shadow: -1px 0 #ddd; }

.workspace { flex: 1; min-height: 0; display: flex; }
.dock { flex: none; display: flex; flex-direction: column; min-height: 0; }
.layers { width: 214px; }
.toolbox { width: 256px; }
.dock-title { display: flex; align-items: center; gap: 2px; height: 18px; padding: 0 2px 0 4px; }
.dock-title h2 { flex: 1; }
.dock-title button { width: 12px; height: 12px; border: 1px solid #666; border-radius: 3px; display: grid; place-items: center; }
.float::before { content: ""; width: 6px; height: 6px; border: 1px solid #555; border-radius: 1px; box-shadow: 1px -1px #aaa; }
.close::before { content: ""; width: 8px; height: 8px; background: linear-gradient(45deg, transparent 38%, #444 38% 62%, transparent 62%), linear-gradient(-45deg, transparent 38%, #444 38% 62%, transparent 62%); }
.dock-tools { display: flex; align-items: center; }
.dock-tools button { position: relative; flex: none; display: grid; place-items: center; }
.dock-tools svg { width: 16px; height: 16px; }
.layers .dock-tools { height: 39px; padding: 0 0 2px 8px; gap: 9px; }
.layers .dock-tools .drop, .layers .dock-tools .side { width: 24px; }
.dock-tools .drop::after, .dock-tools .side::after { content: ""; position: absolute; right: -2px; bottom: -3px; border: 3px solid transparent; border-top-color: #555; border-bottom: 0; }
.layers .dock-tools .side { width: 36px; justify-items: start; }
.layers .dock-tools .side::after { right: 0; bottom: 6px; border-width: 4px 4px 0; }
.dock-tools .more { font-size: 16px; color: #555; margin-left: 6px; }
.tree { flex: 1; min-height: 0; background: #fff; border: 1px solid #b4b4b4; overflow: hidden; display: flex; flex-direction: column; white-space: nowrap; }
.tree > ul { flex: 1; }
.tree li { display: flex; align-items: center; height: 18px; }
.twist { flex: none; width: 8px; height: 4px; background: #555; clip-path: polygon(0 0, 100% 0, 50% 100%); }
.selected { background: #308cc6; color: #fff; }
.layer { font-weight: bold; font-size: 11px; padding-left: 6px; }
.tree .layer.selected { height: 19px; }
.layer .twist { margin-right: 9px; }
.layer.selected .twist { background: #1d3f63; }
.layer .li { flex: none; width: 15px; height: 13px; margin: 0 6px 0 7px; }
.selected label { text-decoration: underline; text-underline-offset: 3px; }
.tree .symbol { height: 20px; padding-left: 43px; gap: 7px; }
.box { width: 17px; height: 17px; border: 1px solid transparent; }
.box.yellow { border-color: #f3e793; }
.tree .band { height: 15px; padding-left: 43px; }
.class { padding-left: 43px; gap: 6px; }
.class i { width: 16px; height: 16px; }
.forest { background: #254f3c; }
.grassland { background: #9bba7e; }
.maize { background: #e0bc53; }
.soybean { background: #609a76; }
.sunflower { background: #cc8a4f; }
.winter { background: #82a8a9; }
.hscroll { height: 15px; display: flex; border-top: 1px solid #b4b4b4; background: #e4e4e4; }
.hscroll button { width: 14px; display: grid; place-items: center; background: #f7f7f7; }
.hscroll button::before { content: ""; width: 4px; height: 8px; background: #444; clip-path: polygon(0 0, 100% 50%, 0 100%); }
.hscroll .left::before { clip-path: polygon(100% 0, 0 50%, 100% 100%); }
.thumb { flex: 10; background: linear-gradient(#fff, #f0f0f0); border: 1px solid #b4b4b4; border-width: 0 1px; }
.track { flex: 3; border-right: 1px solid #b4b4b4; }

.splitter { flex: none; width: 6px; display: grid; place-items: center; }
.splitter::before { content: ""; width: 4px; height: 18px; background: conic-gradient(#b4b4b4 25%, transparent 0) 0 0 / 2px 3px; }
.canvas { flex: 1; min-width: 0; background: #f2f3ed; border: 1px solid #b4b4b4; border-top: 0; display: flex; justify-content: center; padding: 21px 1px 21px 0; }
#map { height: 100%; max-width: 100%; aspect-ratio: 1; display: block; }
.cell { fill: none; stroke: #fff; stroke-opacity: .28; stroke-width: 2px; vector-effect: non-scaling-stroke; }
.cell.review { stroke: #f7df6e; stroke-opacity: .55; }

.toolbox .dock-tools { height: 31px; padding: 0 8px 2px; gap: 9px; }
.toolbox .dock-tools .sep { width: 1px; height: 12px; border: 0; box-shadow: none; background: #ccc; }
.search { display: flex; align-items: center; height: 23px; background: #fff; border: 1px solid #adadad; border-radius: 3px; padding: 0 8px; gap: 7px; }
.search svg { flex: none; width: 13px; height: 13px; }
.search input { flex: 1; min-width: 0; outline: 0; }
.search input::placeholder { color: #888; opacity: 1; }
.search button { width: 13px; height: 10px; line-height: 9px; background: #888; color: #fff; clip-path: polygon(30% 0, 100% 0, 100% 100%, 30% 100%, 0 50%); }
.tree .provider { height: 19px; padding-left: 6px; }
.logo { width: 16px; height: 16px; margin: 0 6px 0 9px; border-radius: 3px; background: #1d3c30; color: #d4efa5; text-align: center; }
.tree .folder { height: 15px; padding-left: 26px; gap: 9px; }
.alg { padding-left: 63px; gap: 7px; }
.alg svg { width: 15px; height: 15px; }

.status { flex: none; height: 29px; display: flex; align-items: center; padding: 0 4px; font-size: 9px; }
.locator { width: 230px; font-size: 12px; }
.ready { flex: 1; padding-left: 8px; }
.coord, .field { height: 22px; background: #fff; border: 1px solid #b4b4b4; border-radius: 2px; }
.coord { width: 36px; margin-left: 3px; }
.plain { display: flex; align-items: center; gap: 3px; }
.plain svg { width: 16px; height: 16px; }
.mouse { margin: 0 11px 0 4px; }
.field { display: flex; width: 88px; margin-left: 4px; }
.field input { flex: 1; min-width: 0; padding-left: 3px; }
.combo button { width: 19px; border-left: 1px solid #b4b4b4; display: grid; place-items: center; }
.combo button::before { content: ""; border: 4px solid transparent; border-top: 5px solid #555; border-bottom: 0; }
.lock { margin: 0 7px 0 11px; }
.steps { width: 14px; border-left: 1px solid #b4b4b4; display: flex; flex-direction: column; align-items: center; justify-content: center; gap: 4px; }
.steps::before, .steps::after { content: ""; border: 4px solid transparent; border-top: 0; border-bottom: 4px solid #555; }
.steps::after { border-top: 4px solid #555; border-bottom: 0; }
.rot { margin-left: 8px; margin-right: 4px; }
.status .render { margin: 0 5px 0 7px; }
.crs { margin-left: 16px; }
.messages { margin: 0 17px 0 19px; }
.grip { width: 9px; height: 9px; align-self: flex-end; background: conic-gradient(#aaa 25%, transparent 0) 0 0 / 3px 3px; clip-path: polygon(100% 0, 100% 100%, 0 100%); }
```
FILE: app.js
```js
// Toolbars: "|" handle, "/" separator; suffixes: "*" active, "-" disabled, ">" has a menu.
document.querySelectorAll('.toolbar').forEach(bar => {
  bar.innerHTML = bar.dataset.tools.split(' ').map(t => {
    if (t === '|') return '<i class="handle"></i>';
    if (t === '/') return '<i class="sep"></i>';
    const name = t.replace(/[*>-]/g, '');
    const off = t.includes('-') ? ' disabled' : '';
    const menu = t.includes('>') ? `<button class="arrow" aria-label="${name} menu"${off}></button>` : '';
    return `<button class="tool${t.includes('*') ? ' on' : ''}" aria-label="${name}"${off}><svg><use href="#i-${name}"/></svg></button>${menu}`;
  }).join('');
});

// Crop raster: 12 x 12 parcels of 16 x 16 pixels. Each parcel is its main class
// followed by the stray pixels of other classes as hex column/row pairs.
// "!" marks a parcel that is up for review.
const colors = { F: '#254f3c', G: '#9bba7e', M: '#e0bc53', S: '#609a76', U: '#cc8a4f', W: '#82a8a9' };
const parcels = [
  ['S Gdd', 'W G84d4a57a8aba9d', '!M G20c1e2e516198afd U708081281a3ecd', 'U M02920696 G17', '!M G10c0d1d2346498a8692a9a4c9ced2e9ebebffe Ua1', '!M U5090f07292b3d457a84c3ede6f Gd2145c6d', 'G M12 W47872def', 'F Sd2e7', 'G W707319ae M579e', '!M G6275e97d Ue4361f', 'G M92c4e51b W3679', 'F'],
  ['!S Mc1c212629203d506d888796afadb6dad1e2e7e9ece4f5fbfff G90c08384644667778768b748c8194a7b8b4d5efe', 'S G624bceee', 'F Gd0 S3d', '!M Gf1f243c5f538191a1b6b3cfc8dbe U98', 'F', 'W G0f', 'G Mb12205c709 W12f5f6', 'F S17', 'F S100729da0c', '!M G90f08125d5a70bbb8d', 'F', '!M Gf012321d9ded Ubc'],
  ['!W G01417172d1334356482b2c1d5f7f', '!M G917268f8890dde Ud3a71a', 'W G3f', '!M U0033b31839ec G2103776addef', '!M G007b0dce6f U3204e6b7e8fc0e8f', 'W Ge021b20304555a9a', 'G W71 M72d558495f7f Ucf', 'W G71e8fc', '!G Ma0b0d294276e W46d798b8396a0b', '!G M8034f6d9 Wf586874a S8c', 'G M9011850628 F16 S3e', '!M G228277f60f U65393d4e'],
  ['S G1127e7 M99', 'F Sb3', 'W G91032575f5d77819db', 'U G47 Ma7dd0e', 'F S90f486 G768e', 'W Gd065564728', 'G Wc3172bbdfd Mf6', '!M G41a152c345869629ef U02e5079d', '!S F61 G0184a41e4f9fff M45bacaac', 'S M84 Ga5ac4d', 'W G7265', 'W U38'],
  ['!S M4050512272a415e9a9aa2bcb5d8e1f Ga061c132a3b3447aacbcfc2dbf', '!U Me07112b2735354c368e99ada9c9d9ecccdbdeced7d Ga1630d', 'W Ge2b5e5983b4d', 'F', 'S Gc5f80b6dff M3a', 'S M61e9 Gc2454d', '!G W70e0210227992a3b5cfe M0324a4c8cafa7baded U7a', 'S G629cae Mb61e F7a7f', '!M U81a1238307890b6eee G63f75f', 'W G0a', 'W U86', 'F'],
  ['S M72 G841546', '!U M011224f516b628ca7b5c1fcf Wbe', 'F', 'F', 'G S15 Mb50a', 'G M4227e88c W93a4', '!G W51b5189ccc U52 M81c2e279a96dbdcf', '!G W2556d7e75e9fef Md6084ecdfcff U7f', '!M Ue112c2d2b374f5a60a3cdcff Ge92d7e4f', '!M G93b4d497d75a6a4ede Udb', '!G M50c508ac W1435873a7acb0d U19', 'G Me15cdc W5628cfef'],
  ['W U95', '!M Gf003f83a7a1b8bdcadcdfe', '!W G6071a1e26327f75889e97aebecedfc4c6c5dad3f4fbf', '!W Ge02161f112c3748456b628f8cd6f', '!S M008014e495d63757aefe4f7fef G21925308c95a2c', 'F S347556a9', '!M U21761a0b1dfe7f G7578', 'F', '!W G5373f395c5e5066649c90a3aeadc7ded6edf', '!W G1141423282e4d51879ecbe', 'W U2179 G95', 'F'],
  ['!M G60013273b36465e6d718e9f9fabd3f7f9f', '!G M60a002526213c3059679fc7dad5e5f4f U753666c8 We457f71ab9bacd', 'U M16e9fabbfc0c', 'S M83 G93744ace Fc7', '!S M02626677c869bc Gb143467888b96a7b4eddde', '!S M6001b1c23233443555849485e5e61767a7a8890b3b8b9bcb1d1e5d5e4e7edefe3f6fcf G20c0c103872959b9af', 'W G904368', 'U M525b5e', 'F', '!M U300115f5397b6def Ge3e79b', '!S M80c0d05122038394b4343565d517285898d8f80a2a4a4b5b6b9adabcfc3daf G1040417292c40607a67768b97c8d5e', '!M Gd20c6ede'],
  ['U Mb536a6d94b', '!S M70f1f28494a7d809393a4a4b8a0b9c7ddd3eaf G304090e18283a4c4d546f7f878b92a0c6c7e5f', 'F', 'S G50527eef Mf16fcf', '!M G9022c4769647b7d768e8cc8f Ub488', 'G M6061e647699cfc W27574f', '!M G605377bd5e U392c5f', 'U Mdb6ebf', '!G M20f091c4e576878eef W90c3c5c613f3f4255607672adabb7c0fcf Ub1a2b54b', '!G Wb0037448aa3cddaf M21c1d45c4d7f U63', '!U Mf2b617271857e70acadbad7eef G03', '!G M90b4362758c91aeb1c8c5f6f W71b13253342687f8aaab4b2e3e U78'],
  ['!M U43a304d6f6f7e84a8cbd0e4f G36294b', '!M G603142a7e9f96b1eaf U26ebfb1dce', 'G Mf0d435a81d S86', 'F', '!U Mc0c1a1a262433444a4e556d608e9faaeee9fff G712565b62a9a', 'F S1e', 'G M810242e5695b7e W688e', '!M G42c7aacf Ue495d76adadb1d', 'U M23335788c8', 'U Gb0 M42d4e76d0f9f', '!M Ua03132c2933463646505372848e86b7b0c8c8d3f Ge61e7edf', '!M G8283d3479a7e Ud8'],
  ['!G W305060b162b49546471728fa4a4b1b3b8b2cad3f M07b8693adb1dedbe U768eef', '!S M312304e6e84ccf Gd05697499b1c0f3f', '!G W70b0d0e00252a395f6465767285989a9d90d8d M80f3c7780afa6bcb6ded0e0fde Ue6d8e99b', 'F', '!S Ge1540405f9edef M62935a', 'F', 'W Gf2', 'W G2088 Uce', 'G M1757 U5e', 'F S26baed', 'U G73 M874ace', '!M G0051c21367f618191afadb U893bbe6f'],
  ['!G U20b0f34a4d W61a152c3056556a6f6f80a3a0e7f M83938494a4761a1b7adceccd2f', '!M Gd083445677bd7ecebfff Uc16a', '!M G902636c9 Uc1d23465d82a1c1d', 'W', 'W', '!S M32d1f7e8dc G9155b7883a4a3bce', 'G Wf3 M98', '!G M405031f2336366fd W81f316263686c728b85e6ede', '!M U80903373a4270bab5d G2adabdbd', 'F', 'S G8017d79c9faf Ff9 Mea0d', '!M G31c10237b7eaab3c6d8dbfef']
];

let grounds = '';
let specks = '';
const outlines = { normal: '', review: '' };
parcels.forEach((row, r) => row.forEach((text, c) => {
  const kind = text[0] === '!' ? 'review' : 'normal';
  const data = text.replace('!', '').replace(/ /g, '');
  const box = `x="${c * 16}" y="${r * 16}" width="16" height="16"`;
  grounds += `<rect fill="${colors[data[0]]}" ${box}/>`;
  for (const [, cls, list] of data.slice(1).matchAll(/([A-Z])([0-9a-f]+)/g)) {
    let d = '';
    for (const p of list.match(/../g)) {
      d += `M${c * 16 + parseInt(p[0], 16)} ${r * 16 + parseInt(p[1], 16)}h1v1h-1z`;
    }
    specks += `<path fill="${colors[cls]}" d="${d}"/>`;
  }
  outlines[kind] += `<rect class="cell ${kind}" ${box}/>`;
}));
document.getElementById('map').innerHTML =
  `<g shape-rendering="crispEdges">${grounds}${specks}</g>${outlines.normal}${outlines.review}`;
```
